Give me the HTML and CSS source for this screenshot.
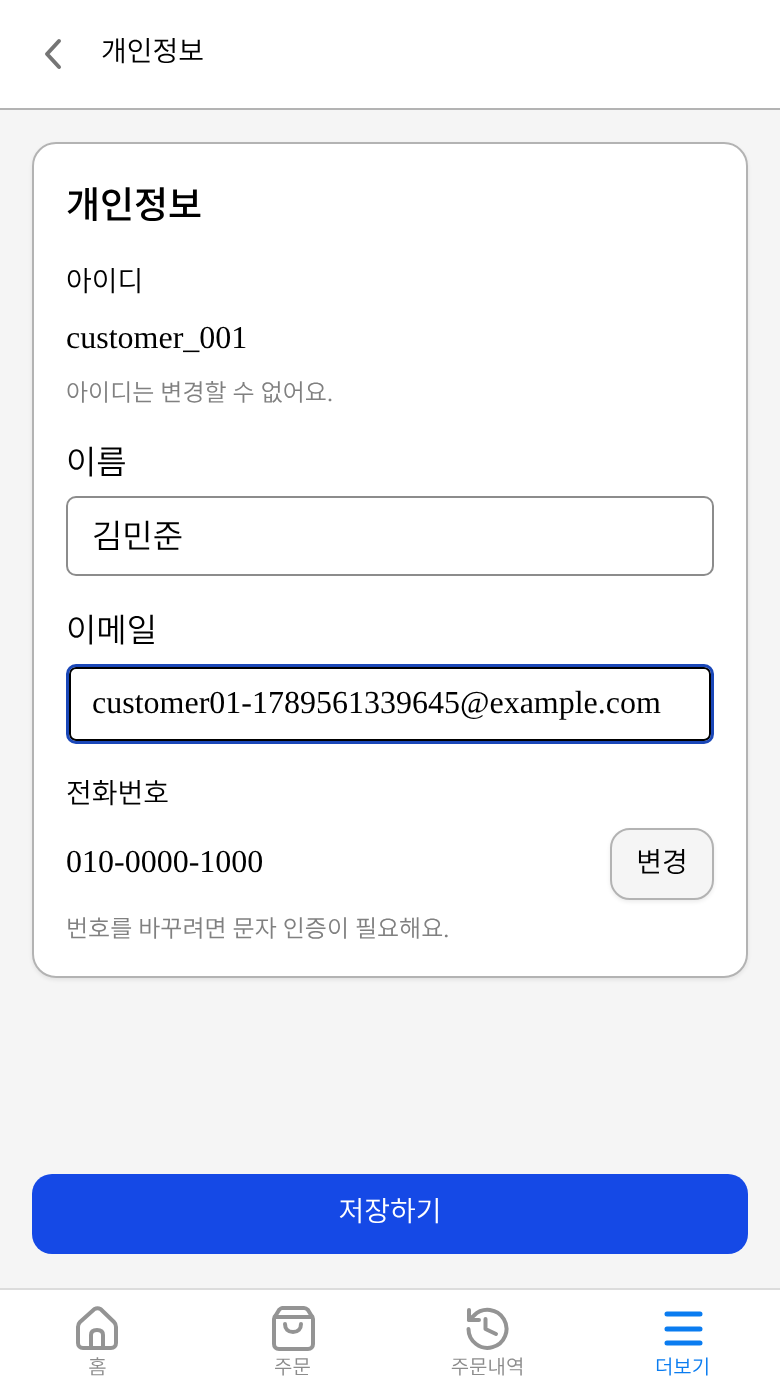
FILE: index.html
```html
<!DOCTYPE html>
<html lang="ko">
<head>
    <meta charset="UTF-8">
    <title>개인정보</title>
    <link rel="stylesheet" href="styles.css">
</head>
<body>
    <div class="page">
        <header class="top">
            <a href="javascript:;" class="back">
                <svg width="24" height="32" viewBox="0 0 24 32"><path d="M17 3 5 16l12 13" fill="none" stroke="#757575" stroke-width="4" stroke-linecap="round" stroke-linejoin="round"/></svg>
            </a>
            <h1 class="top-title">개인정보</h1>
        </header>
        <main class="main">
            <section class="card">
                <h2 class="card-title">개인정보</h2>
                <div class="label label-id">아이디</div>
                <div class="value value-id">customer_001</div>
                <p class="hint">아이디는 변경할 수 없어요.</p>
                <label class="label-big" for="name">이름</label>
                <input class="field field-name" id="name" value="김민준">
                <label class="label-big" for="email">이메일</label>
                <input class="field field-focus" id="email" value="customer01-1789561339645@example.com">
                <div class="label label-phone">전화번호</div>
                <div class="phone-row">
                    <div class="value value-phone">010-0000-1000</div>
                    <button class="btn-change">변경</button>
                </div>
                <p class="hint hint-phone">번호를 바꾸려면 문자 인증이 필요해요.</p>
            </section>
            <button class="btn-save">저장하기</button>
        </main>
        <nav class="tabs">
            <a href="javascript:;" class="tab">
                <svg class="tab-icon" width="48" height="48" viewBox="0 0 48 48" fill="none" stroke="#949494" stroke-width="4" stroke-linejoin="round"><path d="M20.500 5 6 18c-1 1-2 3-2 5v16c0 3 2 5 5 5h28c3 0 5-2 5-5V23c0-2-1-4-2-5L26.500 5c-2-1-4-1-6 0Z"/><path d="M17 44V31c0-3 2-5 6-5s6 2 6 5v13"/></svg>
                <span class="tab-text">홈</span>
            </a>
            <a href="javascript:;" class="tab">
                <svg class="tab-icon" width="48" height="48" viewBox="0 0 48 48" fill="none" stroke="#949494" stroke-width="4" stroke-linecap="round" stroke-linejoin="round"><path d="M13 4h22c2 0 3 1 4 2l3 5c1 1 2 2 2 4v25c0 3-2 5-5 5H10c-3 0-5-2-5-5V15c0-2 1-3 2-4l3-5c1-1 2-2 3-2Z"/><path d="M6 13h37"/><path d="M16 20c0 5 3 8 8 8s8-3 8-8"/></svg>
                <span class="tab-text">주문</span>
            </a>
            <a href="javascript:;" class="tab">
                <svg class="tab-icon" width="48" height="48" viewBox="0 0 48 48" fill="none" stroke="#949494" stroke-width="4" stroke-linecap="round" stroke-linejoin="round"><path d="M4.5 25A19 19 0 1 0 10 11.500L5 16"/><path d="M5 6v10h10"/><path d="M21.500 15v10l10.500 5"/></svg>
                <span class="tab-text">주문내역</span>
            </a>
            <a href="javascript:;" class="tab tab-on">
                <svg class="tab-icon" width="48" height="48" viewBox="0 0 48 48" fill="none" stroke="#0a7cf0" stroke-width="5" stroke-linecap="round"><path d="M8 10h33M8 25h33M8 39h33"/></svg>
                <span class="tab-text">더보기</span>
            </a>
        </nav>
    </div>
</body>
</html>
```

FILE: styles.css
```css
*{
    padding: 0;
    margin: 0;
    box-sizing: border-box;
}
a{
    text-decoration: none;
    color: inherit;
}
body{
    font-family: "Liberation Serif", "Noto Sans CJK KR", serif;
    font-weight: 350;
    text-rendering: geometricPrecision;
    background-color: #f5f5f5;
    color: #000;
}
.page{
    height: 1386px;
    display: flex;
    flex-direction: column;
    overflow: hidden;
    will-change: transform;
}
.top{
    height: 110px;
    flex: none;
    display: flex;
    align-items: center;
    padding: 0 0 0 42px;
    background-color: #fff;
    border-bottom: 2px solid #b3b3b3;
}
.back{
    display: flex;
    width: 59px;
}
.top-title{
    font-size: 28px;
    font-weight: 350;
    line-height: 40px;
    margin-bottom: 2px;
}
.main{
    flex: 1;
    display: flex;
    flex-direction: column;
    padding: 32px 32px 34px;
}
.card{
    height: 836px;
    padding: 32px;
    background-color: #fff;
    border: 2px solid #b3b3b3;
    border-radius: 24px;
    box-shadow: 0 2px 4px rgba(0, 0, 0, .08);
}
.card-title{
    font-size: 37px;
    font-weight: 500;
    line-height: 56px;
    margin-top: 3px;
}
.label{
    font-size: 28px;
    line-height: 40px;
}
.label-id{
    margin-top: 28px;
}
.value{
    font-size: 32px;
    line-height: 40px;
}
.value-id{
    margin-top: 14px;
}
.hint{
    font-size: 24px;
    line-height: 36px;
    color: #808080;
}
.value-id + .hint{
    margin-top: 19px;
}
.label-big{
    display: block;
    margin-top: 28px;
    font-size: 33px;
    line-height: 48px;
}
.field{
    display: block;
    width: 100%;
    height: 80px;
    margin-top: 8px;
    padding: 0 24px 4px;
    font-family: inherit;
    font-size: 32px;
    font-weight: 350;
    color: #000;
    background-color: #fff;
    border: 2px solid #8c8c8c;
    border-radius: 10px;
    outline: none;
    text-rendering: geometricPrecision;
}
.field-name{
    font-size: 33px;
}
.field + .label-big{
    margin-top: 32px;
}
.field-focus{
    padding: 0 23px 4px;
    border: 3px solid #1a47b8;
    box-shadow: inset 0 0 0 2px #000;
}
.label-phone{
    margin-top: 31px;
}
.phone-row{
    display: flex;
    align-items: center;
    justify-content: space-between;
    margin-top: 13px;
}
.value-phone{
    padding-bottom: 6px;
}
.btn-change{
    width: 104px;
    height: 72px;
    font-family: inherit;
    font-size: 28px;
    font-weight: 350;
    color: #000;
    padding-bottom: 6px;
    background-color: #f5f5f5;
    border: 2px solid #b3b3b3;
    border-radius: 20px;
    box-shadow: 0 2px 4px rgba(0, 0, 0, .08);
    text-rendering: geometricPrecision;
}
.hint-phone{
    margin-top: 12px;
}
.btn-save{
    height: 80px;
    margin-top: auto;
    font-family: inherit;
    font-size: 28px;
    font-weight: 350;
    color: #fff;
    padding-bottom: 8px;
    background-color: #1549e6;
    border: 0;
    border-radius: 20px;
    text-rendering: geometricPrecision;
}
.tabs{
    height: 98px;
    flex: none;
    display: flex;
    align-items: flex-start;
    padding-top: 14px;
    background-color: #fff;
    border-top: 2px solid #dcdcdc;
}
.tab{
    flex: 1;
    height: 72px;
    overflow: hidden;
    display: flex;
    flex-direction: column;
    align-items: center;
    font-size: 20px;
    line-height: 26px;
    color: #8c8c8c;
}
.tab-icon{
    flex: none;
}
.tab-text{
    margin-top: 3px;
}
.tab-on{
    color: #0a7cf0;
}
```
